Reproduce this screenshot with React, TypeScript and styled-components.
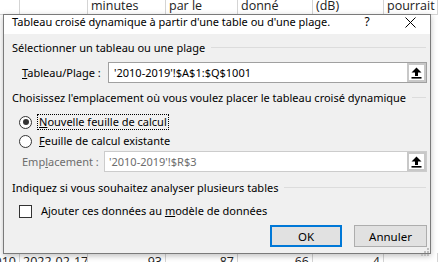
import React from 'react';
import styled, { createGlobalStyle } from 'styled-components';

const GlobalStyle = createGlobalStyle`
  html, body {
    margin: 0;
    padding: 0;
    background: #ffffff;
  }
`;

const uiFont = `"Noto Sans", "Open Sans", sans-serif`;

const Page = styled('div')`
  position: relative;
  width: 438px;
  height: 262px;
  overflow: hidden;
  background: #ffffff;
`;

const Sheet = styled('div')`
  display: flex;
  flex-direction: column;
  height: 100%;
  font-family: "Open Sans", sans-serif;
  font-size: 12.5px;
  color: #222222;
`;

const SheetRow = styled('div')<{ $top?: boolean }>`
  display: grid;
  grid-template-columns: 20px 68px 78px 72px 75px 71px 1fr;
  height: 20px;
  margin-top: ${props => (props.$top ? '-6px' : 'auto')};
  margin-bottom: ${props => (props.$top ? '0' : '-12px')};
  border-bottom: 1px solid #d4d4d4;
`;

const Cell = styled('div')<{ $right?: boolean; $top?: boolean }>`
  display: flex;
  align-items: ${props => (props.$top ? 'flex-end' : 'flex-start')};
  justify-content: ${props => (props.$right ? 'flex-end' : 'flex-start')};
  padding: 0 3px;
  line-height: 17px;
  white-space: nowrap;
  overflow: hidden;
  border-right: 1px solid #d4d4d4;
`;

const Dialog = styled('div')`
  position: absolute;
  left: 3px;
  top: 14px;
  width: 428px;
  height: 240px;
  box-sizing: border-box;
  border: 1px solid #7a7a7a;
  background: #f0f0f0;
  box-shadow: 0 2px 6px rgba(0, 0, 0, 0.25);
  display: flex;
  flex-direction: column;
  font-family: ${uiFont};
  font-size: 11px;
  color: #000000;
`;

const TitleBar = styled('div')`
  height: 19px;
  background: #ffffff;
  display: flex;
  align-items: flex-start;
  padding-left: 8px;
`;

const Title = styled('div')`
  flex: 1;
  line-height: 13px;
  white-space: nowrap;
`;

const HelpMark = styled('div')`
  width: 14px;
  line-height: 13px;
  margin-right: 30px;
  text-align: center;
  font-size: 12px;
`;

const CloseBox = styled('div')`
  width: 12px;
  height: 12px;
  margin-top: 1px;
  margin-right: 14px;
  display: flex;
  align-items: center;
  justify-content: center;
`;

const Body = styled('div')`
  position: relative;
  flex: 1;
  display: flex;
  flex-direction: column;
  padding: 5px 3px 0 8px;
`;

const Section = styled('div')<{ $gap: number }>`
  display: flex;
  align-items: center;
  gap: 6px;
  height: 16px;
  margin-top: ${props => props.$gap}px;
  white-space: nowrap;
  padding-right: 1px;

  &::after {
    content: '';
    flex: 1;
    height: 1px;
    background: #dcdcdc;
  }
`;

const FieldRow = styled('div')<{ $gap: number; $label: number; $disabled?: boolean }>`
  display: grid;
  grid-template-columns: ${props => props.$label}px 1fr;
  align-items: center;
  margin-top: ${props => props.$gap}px;
  padding-left: 10px;
  color: ${props => (props.$disabled ? '#6d6d6d' : '#000000')};
`;

const FieldLabel = styled('div')`
  white-space: nowrap;
  line-height: 16px;
`;

const Field = styled('div')<{ $disabled?: boolean }>`
  display: flex;
  align-items: center;
  height: 21px;
  box-sizing: border-box;
  border: 1px solid ${props => (props.$disabled ? '#cccccc' : '#a0a0a0')};
  background: #ffffff;
`;

const FieldText = styled('div')<{ $pad: number }>`
  flex: 1;
  padding-left: ${props => props.$pad}px;
  white-space: nowrap;
`;

const PickButton = styled('div')`
  width: 19px;
  height: 19px;
  box-sizing: border-box;
  border: 2px solid #c8c8c8;
  background: #ffffff;
  display: flex;
  align-items: center;
  justify-content: center;
`;

const OptionRow = styled('div')<{ $gap: number }>`
  display: flex;
  align-items: center;
  height: 16px;
  margin-top: ${props => props.$gap}px;
  padding-left: 7px;
`;

const Radio = styled('div')<{ $checked?: boolean }>`
  width: 13px;
  height: 13px;
  box-sizing: border-box;
  border: 1px solid #333333;
  border-radius: 50%;
  background: #ffffff;
  display: flex;
  align-items: center;
  justify-content: center;
  margin-right: 5px;

  &::after {
    content: '';
    width: 6px;
    height: 6px;
    border-radius: 50%;
    background: ${props => (props.$checked ? '#333333' : 'transparent')};
  }
`;

const CheckBox = styled('div')`
  width: 13px;
  height: 13px;
  box-sizing: border-box;
  border: 1px solid #333333;
  background: #ffffff;
  margin-right: 7px;
`;

const OptionText = styled('div')<{ $focused?: boolean }>`
  line-height: 14px;
  padding: 0 1px;
  white-space: nowrap;
  border: 1px dotted ${props => (props.$focused ? '#000000' : 'transparent')};
`;

const ButtonRow = styled('div')`
  display: flex;
  justify-content: flex-end;
  gap: 12px;
  margin-top: 6px;
`;

const Button = styled('div')<{ $primary?: boolean; $width: number }>`
  width: ${props => props.$width}px;
  height: 22px;
  box-sizing: border-box;
  border: ${props => (props.$primary ? '2px solid #0078d7' : '1px solid #adadad')};
  background: #e1e1e1;
  display: flex;
  align-items: center;
  justify-content: center;
  font-size: 11.5px;
`;

const Grip = styled('div')`
  position: absolute;
  right: 1px;
  bottom: 1px;
  width: 8px;
  height: 8px;
`;

const UploadIcon: React.FC = () => (
  <svg width="11" height="12" viewBox="0 0 11 12">
    <path d="M5.5 0.5 L10.5 5.5 H7 V9 H4 V5.5 H0.5 Z" fill="#000" />
    <rect x="0.5" y="10" width="10" height="1.6" fill="#000" />
  </svg>
);

const CloseIcon: React.FC = () => (
  <svg width="11" height="11" viewBox="0 0 11 11">
    <path d="M0.5 0.5 L10.5 10.5 M10.5 0.5 L0.5 10.5" stroke="#000" strokeWidth="1" />
  </svg>
);

const GripIcon: React.FC = () => (
  <svg width="8" height="8" viewBox="0 0 8 8">
    {[[6, 0], [3, 3], [6, 3], [0, 6], [3, 6], [6, 6]].map(([x, y]) => (
      <rect key={`${x}-${y}`} x={x} y={y} width="2" height="2" fill="#bdbdbd" />
    ))}
  </svg>
);

const headers = ['', '', 'minutes', 'par le', 'donné', '(dB)', 'pourrait'];
const values = ['2010', '2022-02-17', '93', '87', '66', '-4', ''];

export default function App() {
  return (
    <Page>
      <GlobalStyle />
      <Sheet>
        <SheetRow $top>
          {headers.map((h, i) => (
            <Cell key={i} $top>{h}</Cell>
          ))}
        </SheetRow>
        <SheetRow>
          {values.map((v, i) => (
            <Cell key={i} $right={i !== 1}>{v}</Cell>
          ))}
        </SheetRow>
      </Sheet>

      <Dialog>
        <TitleBar>
          <Title>Tableau croisé dynamique à partir d'une table ou d'une plage.</Title>
          <HelpMark>?</HelpMark>
          <CloseBox><CloseIcon /></CloseBox>
        </TitleBar>
        <Body>
          <Section $gap={0}>Sélectionner un tableau ou une plage</Section>
          <FieldRow $gap={7} $label={86}>
            <FieldLabel><u>T</u>ableau/Plage :</FieldLabel>
            <Field>
              <FieldText $pad={5}>'2010-2019'!$A$1:$Q$1001</FieldText>
              <PickButton><UploadIcon /></PickButton>
            </Field>
          </FieldRow>

          <Section $gap={6}>Choisissez l'emplacement où vous voulez placer le tableau croisé dynamique</Section>
          <OptionRow $gap={9}>
            <Radio $checked />
            <OptionText $focused><u>N</u>ouvelle feuille de calcul</OptionText>
          </OptionRow>
          <OptionRow $gap={3}>
            <Radio />
            <OptionText><u>F</u>euille de calcul existante</OptionText>
          </OptionRow>
          <FieldRow $gap={2} $label={82} $disabled>
            <FieldLabel>Emp<u>l</u>acement :</FieldLabel>
            <Field $disabled>
              <FieldText $pad={4}>'2010-2019'!$R$3</FieldText>
              <PickButton><UploadIcon /></PickButton>
            </Field>
          </FieldRow>

          <Section $gap={7}>Indiquez si vous souhaitez analyser plusieurs tables</Section>
          <OptionRow $gap={8}>
            <CheckBox />
            <OptionText>Ajouter ces données au <u>m</u>odèle de données</OptionText>
          </OptionRow>

          <ButtonRow>
            <Button $primary $width={72}>OK</Button>
            <Button $width={73}>Annuler</Button>
          </ButtonRow>
          <Grip><GripIcon /></Grip>
        </Body>
      </Dialog>
    </Page>
  );
}
